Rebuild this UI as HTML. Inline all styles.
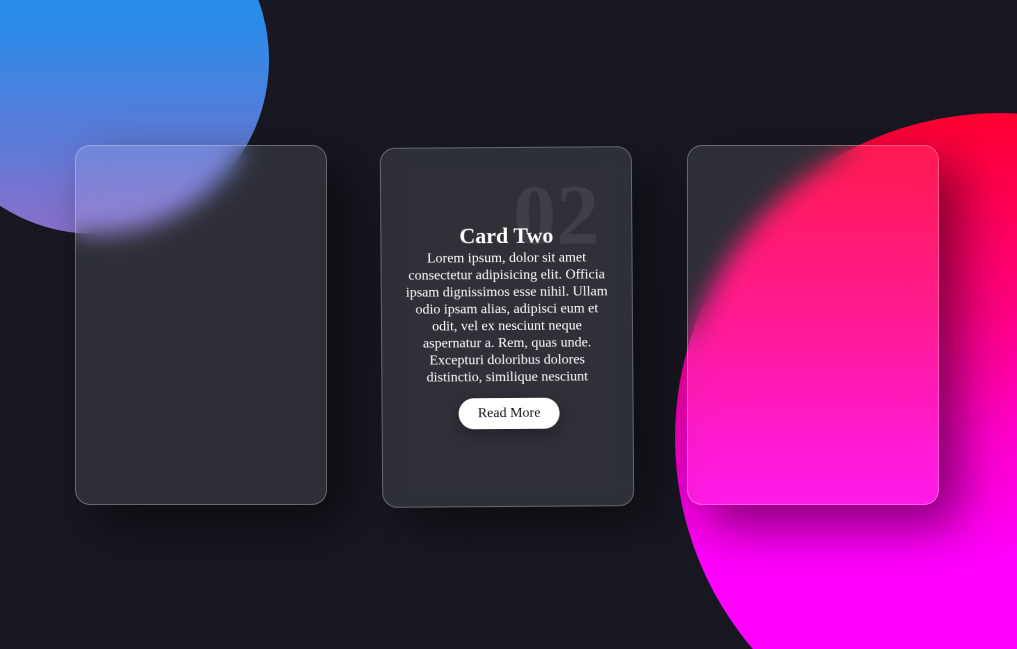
<!DOCTYPE html>
<html><head><meta charset="utf-8"><style>
html,body{margin:0;padding:0;width:1017px;height:649px;overflow:hidden;background:#171821;font-family:"Liberation Serif",serif}
#w{position:relative;width:1017px;height:649px;overflow:hidden}
.c{position:absolute;border-radius:50%}
.c1{left:-79px;top:-114px;width:348px;height:348px;background:linear-gradient(180deg,#2196f3 0%,#2c8be8 40%,#5f7ad6 75%,#8a70cc 100%)}
.c2{left:675px;top:113px;width:650px;height:650px;background:linear-gradient(180deg,#ff0030 0%,#ff0080 30%,#ff00cc 50%,#ff00ff 70%)}
.card{position:absolute;top:145px;width:250px;height:358px;border-radius:15px;background:rgba(255,255,255,0.1);border:1px solid rgba(255,255,255,0.28);backdrop-filter:blur(12px);-webkit-backdrop-filter:blur(12px);box-shadow:20px 20px 50px rgba(0,0,0,0.5);box-sizing:content-box}
.k1{left:75px}.k2{left:381px;top:147px;transform:rotate(-0.4deg)}.k3{left:687px}
.num{position:absolute;right:32px;top:24px;font-size:86px;font-weight:bold;color:rgba(255,255,255,0.08);line-height:1}
.h{position:absolute;left:0;right:0;top:74px;text-align:center;color:#fff;font-size:22px;font-weight:bold;line-height:28px}
.p{position:absolute;left:20px;right:20px;top:102px;text-align:center;color:#fff;font-size:14px;line-height:17px}
.b{position:absolute;left:76px;top:250px;width:101px;height:31px;border-radius:16px;background:#fff;color:#111;font-size:14px;text-align:center;line-height:31px;box-shadow:0 5px 15px rgba(0,0,0,0.3)}
</style></head><body><div id="w">
<div class="c c1"></div><div class="c c2"></div>
<div class="card k1"></div>
<div class="card k2"><div class="num">02</div><div class="h">Card Two</div><div class="p">Lorem ipsum, dolor sit amet consectetur adipisicing elit. Officia ipsam dignissimos esse nihil. Ullam odio ipsam alias, adipisci eum et odit, vel ex nesciunt neque aspernatur a. Rem, quas unde. Excepturi doloribus dolores distinctio, similique nesciunt</div><div class="b">Read More</div></div>
<div class="card k3"></div>
</div></body></html>
